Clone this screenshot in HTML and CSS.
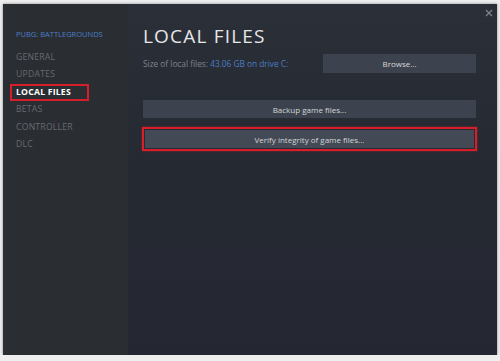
FILE: index.html
```html
<!DOCTYPE html>
<html>
<head>
<link rel="stylesheet" href="styles.css">
<title>PUBG: BATTLEGROUNDS - Properties</title>
</head>
<body>
  <div class="window">
    <div class="sidebar">
      <div class="game_title">PUBG: BATTLEGROUNDS</div>
      <div class="nav_item">GENERAL</div>
      <div class="nav_item">UPDATES</div>
      <div class="nav_item nav_active">LOCAL FILES</div>
      <div class="nav_item">BETAS</div>
      <div class="nav_item">CONTROLLER</div>
      <div class="nav_item">DLC</div>
    </div>
    <div class="content">
      <svg class="close_btn" width="8" height="8" viewBox="0 0 8 8">
        <path d="M1 1 L7 7 M7 1 L1 7" stroke="#7d838c" stroke-width="1.3"/>
      </svg>
      <h1 class="page_title">LOCAL FILES</h1>
      <div class="size_row">
        <div class="size_text">Size of local files: <span class="size_value">43.06 GB on drive C:</span></div>
        <button type="button" class="steam_button browse_button">Browse...</button>
      </div>
      <button type="button" class="steam_button wide_button">Backup game files...</button>
      <div class="highlight">
        <button type="button" class="steam_button wide_button">Verify integrity of game files...</button>
      </div>
    </div>
  </div>
</body>
</html>
```

FILE: styles.css
```css
body {
  margin: 0;
  background-color: #eeeeee;
  font-family: "Open Sans", "Liberation Sans", sans-serif;
}

.window {
  display: flex;
  margin: 4px 0 0 3px;
  width: 494px;
  height: 351px;
  background-color: #262a32;
  box-shadow: 0 0 3px rgba(0, 0, 0, 0.4);
}

/* left column */
.sidebar {
  width: 125px;
  padding: 21px 0 0 13px;
  box-sizing: border-box;
  background-color: #2a2d32;
}

.game_title {
  height: 18px;
  line-height: 18px;
  font-size: 7.5px;
  color: #4b7fc6;
  margin-bottom: 5.5px;
}

.nav_item {
  height: 17.6px;
  line-height: 17.6px;
  font-size: 8.7px;
  color: #666b73;
  letter-spacing: 0.2px;
}

.nav_active {
  color: #ffffff;
  font-weight: bold;
  width: 79px;
  margin-left: -6px;
  padding-left: 4px;
  border: 2px solid #d61f2a;
  box-sizing: border-box;
  line-height: 13.6px;
}

/* right side */
.content {
  position: relative;
  flex: 1;
  padding: 19px 21px 0 15px;
  background: linear-gradient(to bottom, #2b2f37 0%, #262a33 40%, #242731 100%);
}

.close_btn {
  position: absolute;
  top: 5px;
  right: 4px;
}

.page_title {
  margin: 0;
  font-size: 19px;
  font-weight: normal;
  letter-spacing: 1.2px;
  line-height: 26px;
  color: #e6e7e9;
}

.size_row {
  display: flex;
  justify-content: space-between;
  align-items: center;
  margin-top: 5px;
}

.size_text {
  font-size: 8.3px;
  color: #7f858d;
}

.size_value {
  color: #4a7dc3;
}

.steam_button {
  border: none;
  background-color: #3d434e;
  color: #d4d6d9;
  font-family: "Open Sans", "Liberation Sans", sans-serif;
  font-size: 8px;
  padding: 0;
}

.browse_button {
  width: 153px;
  height: 19px;
}

.wide_button {
  display: block;
  width: 100%;
  height: 18px;
}

.size_row + .wide_button {
  margin-top: 27px;
}

.highlight {
  margin: 9px -1px 0 -1px;
  padding: 1px;
  border: 2px solid #d61f2a;
  box-shadow: 0 0 2px rgba(214, 31, 42, 0.6);
}

.highlight .wide_button {
  background-color: #434955;
}
```
